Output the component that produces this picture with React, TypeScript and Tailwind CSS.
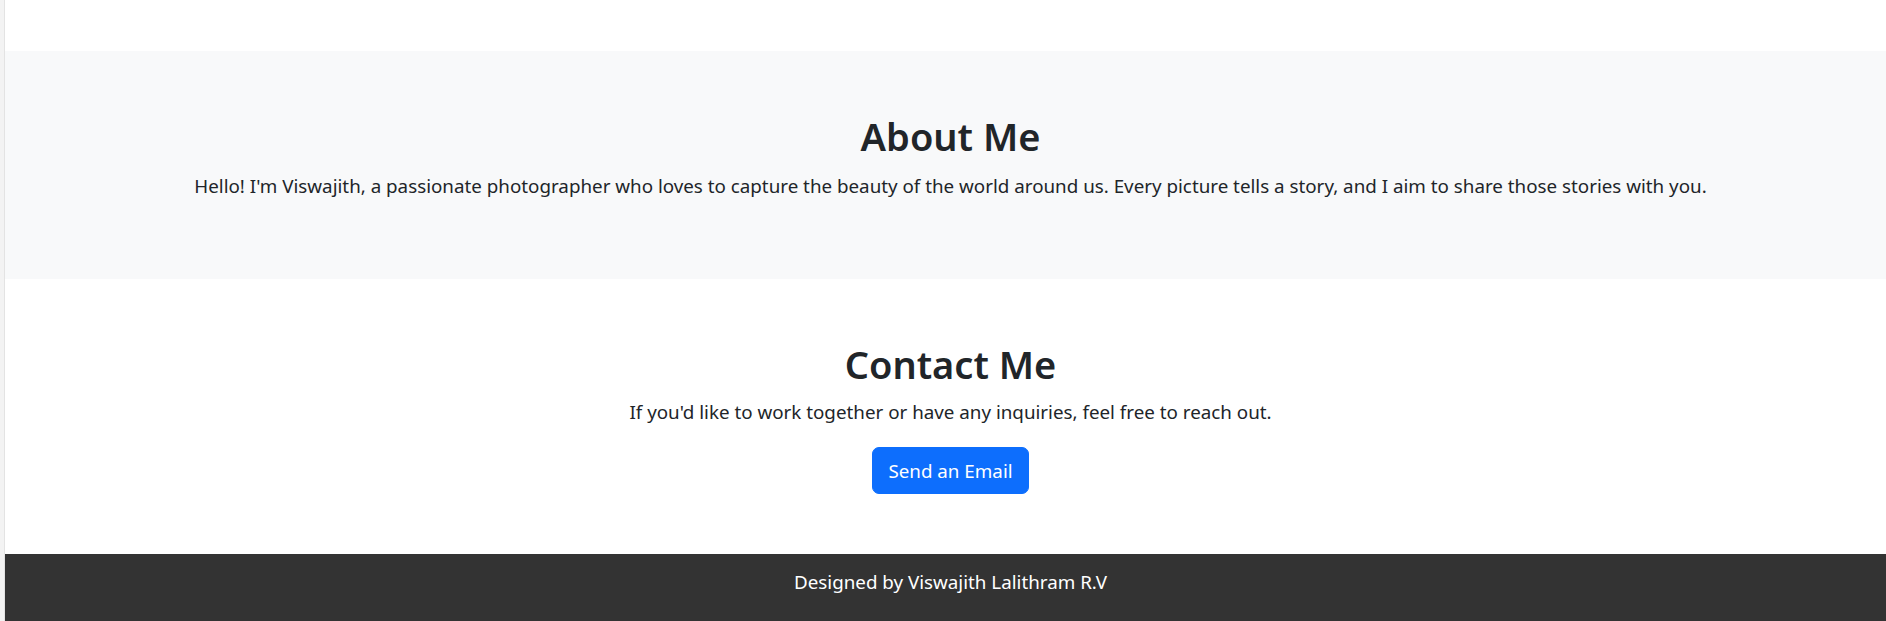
export default function App() {
  return (
    <div className="flex min-h-[621px] w-full bg-white text-[#212529]" style={{ fontFamily: '"Noto Sans", "Open Sans", sans-serif' }}>
      <div className="w-[4px] shrink-0 bg-[#f3f3f3]" />
      <div className="w-[1px] shrink-0 bg-[#e3e3e3]" />
      <div className="flex min-w-0 flex-1 flex-col">
        <div className="h-[51px] bg-white" />
        <section className="bg-[#f8f9fa] py-[60px] pl-[10px] text-center">
          <h2 className="mb-[10px] pt-[2px] text-[38px] leading-[46px] font-semibold">About Me</h2>
          <p className="mb-[18px] pt-[2px] text-[18.8px] leading-[30px]">
            Hello! I'm Viswajith, a passionate photographer who loves to capture the beauty of the world around us. Every picture tells a story, and I aim to share those stories with you.
          </p>
        </section>
        <section className="flex flex-col items-center bg-white py-[60px] pl-[10px] text-center">
          <h2 className="mb-[10px] pt-[2px] text-[38px] leading-[46px] font-semibold">Contact Me</h2>
          <p className="mb-[20px] text-[18.8px] leading-[30px]">
            If you'd like to work together or have any inquiries, feel free to reach out.
          </p>
          <button className="h-[47px] rounded-[7px] border border-[#0d6efd] bg-[#0d6efd] px-[15px] text-[18.8px] leading-[30px] text-white">
            Send an Email
          </button>
        </section>
        <footer className="flex h-[67px] items-start justify-center bg-[#333333] pt-[13px] pl-[10px] text-[18.8px] leading-[30px] text-white">
          Designed by Viswajith Lalithram R.V
        </footer>
      </div>
    </div>
  );
}
